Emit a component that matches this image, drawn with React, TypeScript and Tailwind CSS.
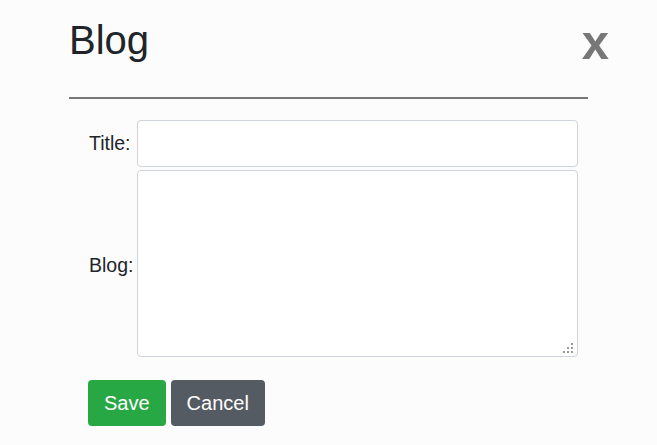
import React from "react";

function Grip() {
  const dots = [
    [8, 0],
    [4, 4],
    [8, 4],
    [0, 8],
    [4, 8],
    [8, 8],
  ];
  return (
    <div className="absolute right-[5px] bottom-[4px] w-[10px] h-[10px] pointer-events-none">
      {dots.map(([x, y], i) => (
        <div
          key={i}
          className="absolute w-[2px] h-[2px] bg-[#9a9a9a]"
          style={{ left: x, top: y }}
        />
      ))}
    </div>
  );
}

export default function App() {
  return (
    <div
      className="min-h-[445px] w-full bg-[#fcfcfc] text-[#212529]"
      style={{ fontFamily: '"Liberation Sans", Arial, sans-serif' }}
    >
      <div className="pl-[69px] pt-[16px]">
        <div className="flex items-start justify-between w-[540px] h-[48px]">
          <h1 className="text-[40px] leading-[48px] font-normal">Blog</h1>
          <span className="text-[49px] leading-[44px] mt-[4px] font-bold text-[#777777]">x</span>
        </div>
        <div className="w-[519px] h-[2px] bg-[#777777] mt-[33px]" />
      </div>
      <div className="pl-[88px] pt-[21px]">
        <div className="flex items-center">
          <label className="w-[49px] pl-[1px] text-[19.5px]">Title:</label>
          <input
            type="text"
            className="w-[441px] h-[47px] bg-white border border-[#ced4da] rounded-[4px] outline-none"
          />
        </div>
        <div className="flex items-center mt-[3px]">
          <label className="w-[49px] pl-[1px] text-[19.5px] mt-[4px]">Blog:</label>
          <div className="relative">
            <textarea className="w-[441px] h-[187px] bg-white border border-[#ced4da] rounded-[4px] outline-none block resize-none" />
            <Grip />
          </div>
        </div>
        <div className="flex gap-[5px] mt-[23px]">
          <button className="h-[46px] px-[16px] rounded-[4px] bg-[#28a745] text-white text-[20px]">
            Save
          </button>
          <button className="h-[46px] px-[16px] rounded-[4px] bg-[#545b62] text-white text-[20px]">
            Cancel
          </button>
        </div>
      </div>
    </div>
  );
}
